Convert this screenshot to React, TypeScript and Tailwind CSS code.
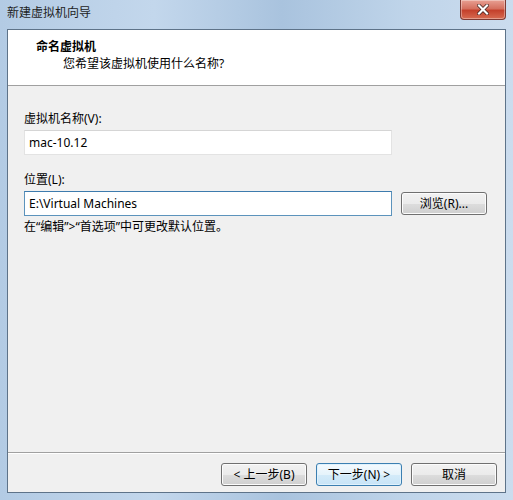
import React from "react";

function WinButton({
  children,
  focused = false,
  className = "",
}: {
  children: React.ReactNode;
  focused?: boolean;
  className?: string;
}) {
  return (
    <button
      className={
        "h-[23px] rounded-[3px] border text-[12px] leading-none text-black flex items-center justify-center " +
        (focused
          ? "border-[#3c7fb1] bg-[linear-gradient(#f4fafe_0%,#e6f3fb_50%,#d4ebf9_51%,#c8e4f7_100%)] shadow-[inset_0_0_0_1px_#e0f2fd]"
          : "border-[#707070] bg-[linear-gradient(#f2f2f2_0%,#ebebeb_50%,#dddddd_51%,#cfcfcf_100%)] shadow-[inset_0_0_0_1px_#fcfcfc]") +
        " " +
        className
      }
    >
      {children}
    </button>
  );
}

export default function App() {
  return (
    <div className="w-[513px] h-[500px] flex flex-col px-[7px] pb-[7px] bg-[linear-gradient(90deg,#b3cbe4_0%,#c3d7ec_30%,#a9c3de_55%,#c0d5ea_80%,#cbdcee_100%)] font-['Noto_Sans','Noto_Sans_CJK_SC',sans-serif] text-[12px] text-black">
      {/* Title bar */}
      <div className="h-[29px] flex items-start justify-between">
        <span className="pt-[5px] text-[12px] leading-[16px] text-[#1e1e1e]">新建虚拟机向导</span>
        <div className="w-[46px] h-[20px] rounded-b-[4px] border border-t-0 border-[#7d3a34] bg-[linear-gradient(#e8a093_0%,#d5705f_45%,#c4412c_55%,#d76b51_100%)] flex items-center justify-center shadow-[inset_0_0_0_1px_rgba(255,255,255,0.35)]">
          <svg width="12" height="11" viewBox="0 0 12 11">
            <path d="M2 1.5 L10 9.5 M10 1.5 L2 9.5" stroke="#3a1c18" strokeWidth="3.6" strokeLinecap="square" />
            <path d="M2 1.5 L10 9.5 M10 1.5 L2 9.5" stroke="#ffffff" strokeWidth="2.2" strokeLinecap="square" />
          </svg>
        </div>
      </div>

      {/* Client area */}
      <div className="flex-1 flex flex-col border border-[#5e7389] bg-[#f0f0f0]">
        {/* Header */}
        <div className="h-[56px] bg-white border-b border-[#a0a0a0] pl-[28px] pt-[9px]">
          <div className="font-bold leading-[16px]">命名虚拟机</div>
          <div className="pl-[27px] leading-[16px] mt-[1px]">您希望该虚拟机使用什么名称?</div>
        </div>

        {/* Body */}
        <div className="flex-1 flex flex-col pl-[16px]">
          <div className="mt-[25px] leading-[16px]">虚拟机名称(V):</div>
          <div className="mt-[3px] w-[368px] h-[25px] bg-white border border-[#e3e3e3] border-t-[#d5d5d5] flex items-center pl-[4px]">
            mac-10.12
          </div>
          <div className="mt-[17px] leading-[16px]">位置(L):</div>
          <div className="mt-[3px] flex items-center">
            <div className="w-[368px] h-[25px] bg-white border border-[#5c93bc] border-t-[#3d7bad] flex items-center pl-[4px]">
              E:\Virtual Machines
            </div>
            <WinButton className="ml-[9px] w-[86px]">浏览(R)...</WinButton>
          </div>
          <div className="mt-[3px] leading-[16px]">{"在“编辑”>“首选项”中可更改默认位置。"}</div>
        </div>

        {/* Footer */}
        <div className="border-t border-[#a0a0a0] shadow-[inset_0_1px_0_#ffffff] h-[40px] flex items-start justify-end pt-[10px] pr-[8px]">
          <WinButton className="w-[86px]">&lt; 上一步(B)</WinButton>
          <WinButton focused className="w-[86px] ml-[9px]">下一步(N) &gt;</WinButton>
          <WinButton className="w-[86px] ml-[9px]">取消</WinButton>
        </div>
      </div>
    </div>
  );
}
